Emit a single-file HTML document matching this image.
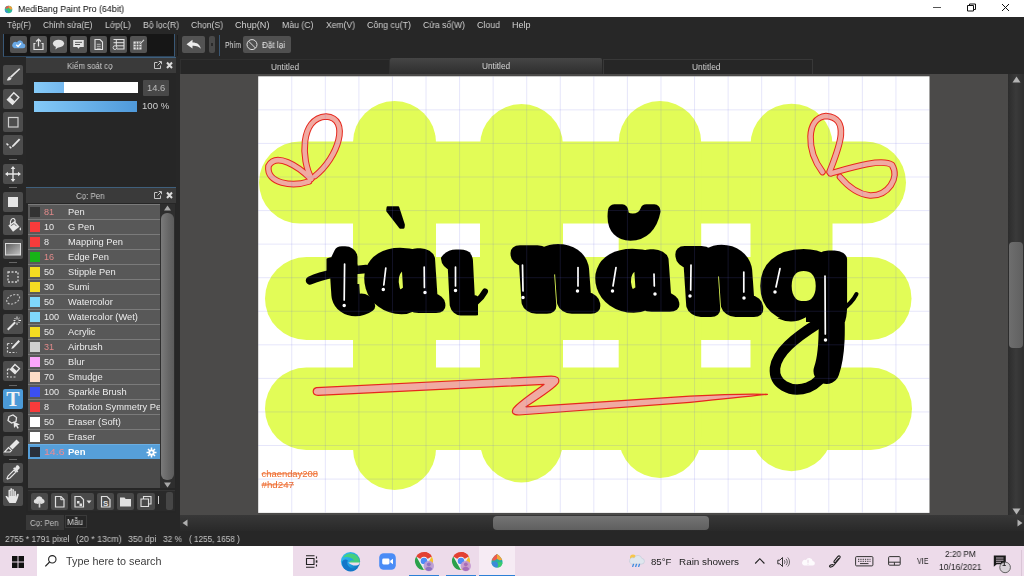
<!DOCTYPE html>
<html lang="vi">
<head>
<meta charset="utf-8">
<title>MediBang Paint Pro (64bit)</title>
<style>
*{box-sizing:border-box;margin:0;padding:0}
html,body{width:1024px;height:576px;overflow:hidden;background:#272727}
body{position:relative;font-family:"Liberation Sans","DejaVu Sans",sans-serif;font-size:9px;color:#d6d6d6}
.abs{position:absolute}
.tx{will-change:transform;position:absolute;white-space:nowrap;transform-origin:0 50%;display:block}
#titlebar{position:absolute;left:0;top:0;width:1024px;height:17px;background:#fff;color:#111}
#menubar{position:absolute;left:0;top:17px;width:1024px;height:16px;background:#272727;color:#d2d2d2}
#toolbar{position:absolute;left:0;top:33px;width:1024px;height:24px;background:#272727;color:#d8d8d8}
.tbgroup{position:absolute;left:3px;top:1px;width:172px;height:23px;background:#161616;border-left:1px solid #3a5876;border-right:1px solid #3a5876;border-bottom:1px solid #2c4359}
.tbtn{position:absolute;top:3px;width:17px;height:17px;background:#535353;border-radius:2px}
.tbtn svg{position:absolute;left:0;top:0;width:17px;height:17px}
#tools{position:absolute;left:0;top:57px;width:26px;height:473px;background:#272727}
.tool{position:absolute;left:3px;width:20px;height:20px;background:#4d4d4d;border-radius:2px}
.tool svg{position:absolute;left:0;top:0;width:20px;height:20px}
.tsep{position:absolute;left:9px;width:8px;height:1px;background:#666}
.panel{position:absolute;left:26px;width:150px;background:#262626}
.phead{position:absolute;left:0;top:0;width:150px;height:16px;background:#3a3a3a;border-top:1px solid #3f5f7c;color:#cdcdcd}
#canvasarea{position:absolute;left:179.5px;top:58px;width:828.5px;height:457px;background:#4b4a49;overflow:hidden}
#status{position:absolute;left:0;top:531px;width:1024px;height:15px;background:#272727;color:#c6c6c6}
#taskbar{position:absolute;left:0;top:546px;width:1024px;height:30px;background:#eddbea;color:#222}
#search{position:absolute;left:36.5px;top:0;width:256.5px;height:30px;background:#fff}
.row{position:absolute;left:0;width:132px;height:15px;overflow:hidden;background:#585858;border-top:1px solid #7b7b7b;color:#ececec}
.row i{position:absolute;left:2px;top:1.5px;width:10px;height:10px;display:block}
</style>
</head>
<body>
<div id="titlebar">
<svg class="abs" style="left:3.5px;top:4.5px" width="9" height="9" viewBox="0 0 11 11"><circle cx="5.5" cy="5.5" r="4.6" fill="#2fb7a0"/><path d="M5.5 0.9A4.6 4.6 0 0 1 10.1 5.5L5.5 5.5Z" fill="#f2a03c"/><path d="M5.5 0.9A4.6 4.6 0 0 0 1.2 4L5.5 5.5Z" fill="#e8574f"/><circle cx="5.3" cy="6" r="2.3" fill="#35c46e"/><path d="M1 6.5A4.6 4.6 0 0 0 4 9.9L5 7Z" fill="#3b8fd6"/></svg>
<span class="tx" style="left:18.0px;top:3.8px;font-size:9.3px;line-height:11px;transform:scaleX(0.950);color:#000;">MediBang Paint Pro (64bit)</span>
<svg class="abs" style="left:925px;top:0" width="99" height="17" viewBox="0 0 99 17"><path d="M8 7.5H16" stroke="#555" stroke-width="1" fill="none"/><path d="M42.5 5.5h6v5.5h-6zM44.5 5.5v-1.5h6v5.5h-2" stroke="#111" stroke-width="1" fill="none"/><path d="M77 4l7 7M84 4l-7 7" stroke="#111" stroke-width="1" fill="none"/></svg>
</div>
<div id="menubar">
<span class="tx" style="left:6.5px;top:3.1px;font-size:9.0px;line-height:11px;transform:scaleX(0.889);">Tệp(F)</span>
<span class="tx" style="left:43.0px;top:3.1px;font-size:9.0px;line-height:11px;transform:scaleX(0.924);">Chỉnh sửa(E)</span>
<span class="tx" style="left:105.0px;top:3.1px;font-size:9.0px;line-height:11px;transform:scaleX(0.948);">Lớp(L)</span>
<span class="tx" style="left:142.5px;top:3.1px;font-size:9.0px;line-height:11px;transform:scaleX(0.960);">Bộ lọc(R)</span>
<span class="tx" style="left:190.5px;top:3.1px;font-size:9.0px;line-height:11px;transform:scaleX(0.955);">Chọn(S)</span>
<span class="tx" style="left:234.5px;top:3.1px;font-size:9.0px;line-height:11px;transform:scaleX(1.014);">Chụp(N)</span>
<span class="tx" style="left:281.5px;top:3.1px;font-size:9.0px;line-height:11px;transform:scaleX(0.969);">Màu (C)</span>
<span class="tx" style="left:325.5px;top:3.1px;font-size:9.0px;line-height:11px;transform:scaleX(0.951);">Xem(V)</span>
<span class="tx" style="left:366.5px;top:3.1px;font-size:9.0px;line-height:11px;transform:scaleX(0.977);">Công cụ(T)</span>
<span class="tx" style="left:422.5px;top:3.1px;font-size:9.0px;line-height:11px;transform:scaleX(0.954);">Cửa sổ(W)</span>
<span class="tx" style="left:476.5px;top:3.1px;font-size:9.0px;line-height:11px;transform:scaleX(0.978);">Cloud</span>
<span class="tx" style="left:512.0px;top:3.1px;font-size:9.0px;line-height:11px;transform:scaleX(0.999);">Help</span>
</div>
<div id="toolbar">
<div class="tbgroup"></div>
<div class="tbtn" style="left:9.5px"><svg viewBox="0 0 17 17"><path d="M4.2 12.2h8.6a2.4 2.4 0 0 0 .4-4.8 3.3 3.3 0 0 0-6.2-1.2 2.6 2.6 0 0 0-2.8 6z" fill="#6aa9e6"/><path d="M6.3 8.8l1.7 1.7 3-3.2" stroke="#fff" stroke-width="1.3" fill="none"/></svg></div>
<div class="tbtn" style="left:29.5px"><svg viewBox="0 0 17 17"><path d="M5.5 7.5h-1.5v6h9v-6h-1.5" stroke="#e4e4e4" stroke-width="1.2" fill="none"/><path d="M8.5 10.5v-7M6.2 5.5l2.3-2.4 2.3 2.4" stroke="#e4e4e4" stroke-width="1.2" fill="none"/></svg></div>
<div class="tbtn" style="left:49.7px"><svg viewBox="0 0 17 17"><ellipse cx="8.5" cy="7.6" rx="5.6" ry="3.9" fill="#e4e4e4"/><path d="M6 10.5l-.6 3 3.2-2.4z" fill="#e4e4e4"/></svg></div>
<div class="tbtn" style="left:70.0px"><svg viewBox="0 0 17 17"><path d="M3.2 4h10.6v7h-4l-1.3 1.8-1.3-1.8h-4z" fill="#e4e4e4"/><path d="M5 6.3h7M5 8.5h5" stroke="#555" stroke-width="1"/></svg></div>
<div class="tbtn" style="left:90.0px"><svg viewBox="0 0 17 17"><path d="M5 3.5h5l2.5 2.5v7.5h-7.5z" stroke="#e4e4e4" stroke-width="1.1" fill="none"/><path d="M6.800 8.300h3.900M6.800 10.300h3.900M6.800 12.300h3.900" stroke="#e4e4e4" stroke-width=".7"/></svg></div>
<div class="tbtn" style="left:110.0px"><svg viewBox="0 0 17 17"><path d="M3.5 3.5h10.5v9.5h-7" stroke="#e4e4e4" stroke-width="1.1" fill="none"/><path d="M3.5 6.7h10.5M6.5 9.8h7.5M6.3 3.5v9" stroke="#e4e4e4" stroke-width="1"/><circle cx="5" cy="11.6" r="1.9" stroke="#e4e4e4" stroke-width=".9" fill="#535353"/></svg></div>
<div class="tbtn" style="left:130.2px"><svg viewBox="0 0 17 17"><path d="M3.5 5.5h8v8h-8z" fill="#e4e4e4"/><path d="M6.2 5.5v8M8.9 5.5v8M3.5 8.2h8M3.5 10.9h8" stroke="#535353" stroke-width=".9"/><path d="M9.5 7.5l4-4.2 1 .9-4 4.2z" fill="#e4e4e4" stroke="#535353" stroke-width=".6"/></svg></div>
<div class="abs" style="left:177px;top:2px;width:1px;height:21px;background:#1b1b1b"></div>
<div class="tbtn" style="left:182px;width:23px"><svg style="width:23px" viewBox="0 0 23 17"><path d="M4.5 8.2l6-4.4v2.7c4.5 0 7.6 2 8.3 6.3-1.700-2.300-4.300-3.200-8.300-3.100v2.900z" fill="#ececec"/></svg></div>
<div class="abs" style="left:209px;top:3px;width:6px;height:17px;background:#4a4a4a;border-radius:2px"></div>
<div class="abs" style="left:211px;top:10px;width:2px;height:3px;background:#2a2a2a"></div>
<div class="abs" style="left:219px;top:2px;width:1px;height:21px;background:#3a5672"></div>
<span class="tx" style="left:225.0px;top:6.5px;font-size:8.6px;line-height:10px;transform:scaleX(0.798);color:#dcdcdc;">Phím</span>
<div class="abs" style="left:243px;top:3px;width:48px;height:17px;background:#505050;border-radius:2px"></div>
<svg class="abs" style="left:245px;top:5px" width="14" height="14" viewBox="0 0 14 14"><circle cx="7" cy="6.6" r="5" stroke="#dedede" stroke-width="1" fill="none"/><path d="M3.6 3.2l6.800 6.800" stroke="#dedede" stroke-width="1"/></svg>
<span class="tx" style="left:262.0px;top:6.5px;font-size:8.6px;line-height:10px;transform:scaleX(0.944);color:#e2e2e2;">Đặt lại</span>
</div>
<div id="tools">
<div class="tool" style="top:8.2px"><svg viewBox="0 0 20 20"><path d="M16.2 3.2l1 1-8.800 8.600-1.400-1.400z" fill="#e6e6e6"/><path d="M6.600 11.600l2 2c-.8 1.700-2.700 2.300-4.800 1.600.9-.7.700-2.700 2.800-3.600z" fill="#e6e6e6"/></svg></div>
<div class="tool" style="top:31.5px"><svg viewBox="0 0 20 20"><path d="M10.800 3.800l5 4.600-6.300 6.900-5-4.600z" fill="none" stroke="#e6e6e6" stroke-width="1.400"/><path d="M7 8l5 4.600-2.500 2.700-5-4.600z" fill="#e6e6e6"/></svg></div>
<div class="tool" style="top:55.0px"><svg viewBox="0 0 20 20"><rect x="5.500" y="5.500" width="9.500" height="9.500" fill="none" stroke="#cfcfcf" stroke-width="1.200"/></svg></div>
<div class="tool" style="top:78.0px"><svg viewBox="0 0 20 20"><path d="M16 3.500l1.300 1.300-6.500 6.700-2 .7.700-2z" fill="#e6e6e6"/><path d="M3.500 8.500l1.800 1.800M6.500 11.500l1.800 1.800" stroke="#e6e6e6" stroke-width="1.600"/></svg></div>
<div class="tool" style="top:106.5px"><svg viewBox="0 0 20 20"><path d="M10 3v14M3 10h14" stroke="#e6e6e6" stroke-width="1.400"/><path d="M10 2l2.300 3h-4.600zM10 18l2.300-3h-4.600zM2 10l3-2.300v4.600zM18 10l-3-2.300v4.600z" fill="#e6e6e6"/></svg></div>
<div class="tool" style="top:134.7px"><svg viewBox="0 0 20 20"><rect x="5" y="5" width="10" height="10" fill="#e6e6e6"/></svg></div>
<div class="tool" style="top:158.0px"><svg viewBox="0 0 20 20"><path d="M5.300 10.500l6.200-4.500 5 5.800-6.500 5z" fill="#e6e6e6"/><path d="M7.500 9.500c-.8-3.500 1.200-6.500 3-6 1.300.4 1.800 2 1.600 3.500" stroke="#e6e6e6" stroke-width="1.100" fill="none"/><path d="M17.300 12.300c.9 1.400 1.100 2.700 0 3.100-1.100-.4-.9-1.700 0-3.100z" fill="#e6e6e6"/><path d="M7.800 10.800l3.300-2.200 2.500 2.600" stroke="#4d4d4d" stroke-width=".8" fill="none"/></svg></div>
<div class="tool" style="top:181.5px"><svg viewBox="0 0 20 20"><defs><linearGradient id="gg" x1="0" x2="1" y1="0" y2="1"><stop offset="0" stop-color="#5c5c5c"/><stop offset="1" stop-color="#c4c4c4"/></linearGradient></defs><rect x="5" y="4.500" width="15" height="11.500" fill="url(#gg)" stroke="#dcdcdc" stroke-width="1" transform="translate(-2.500 0)"/></svg></div>
<div class="tool" style="top:209.5px"><svg viewBox="0 0 20 20"><rect x="5" y="5" width="10" height="10" fill="none" stroke="#cfcfcf" stroke-width="1.300" stroke-dasharray="2 1.500"/></svg></div>
<div class="tool" style="top:233.0px"><svg viewBox="0 0 20 20"><path d="M4 12c-1.500-3 3-7 8-7.500 4-.3 5.500 2 4 5-1.500 3-6 5-9 4.500-1.500-.2-2.500-1-3-2z" fill="none" stroke="#bdbdbd" stroke-width="1.200" stroke-dasharray="2 1.500"/></svg></div>
<div class="tool" style="top:256.5px"><svg viewBox="0 0 20 20"><path d="M4 15l7.500-7.500 1.400 1.400-7.500 7.500z" fill="#e6e6e6"/><path d="M14 2.500v3M14 8.500v2.500M10.500 6.500h2M15.500 6.500h2.500M11.500 4l1.200 1.200M16.500 4l-1.200 1.200M16.500 9l-1.200-1.200" stroke="#e6e6e6" stroke-width="1"/></svg></div>
<div class="tool" style="top:280.3px"><svg viewBox="0 0 20 20"><path d="M4.500 6.500v9h9" fill="none" stroke="#cfcfcf" stroke-width="1.200" stroke-dasharray="2 1.500"/><path d="M4.500 6.500h5" fill="none" stroke="#cfcfcf" stroke-width="1.200" stroke-dasharray="2 1.500"/><path d="M15.500 3l1.500 1.500-6.500 6.700-2.200.8.800-2.200z" fill="#e6e6e6"/></svg></div>
<div class="tool" style="top:303.5px"><svg viewBox="0 0 20 20"><path d="M4.500 8v8h9" fill="none" stroke="#cfcfcf" stroke-width="1.200" stroke-dasharray="2 1.500"/><path d="M4.500 8h3" fill="none" stroke="#cfcfcf" stroke-width="1.200" stroke-dasharray="2 1.500"/><path d="M12 3.500l4.500 4-4.500 5-4.500-4z" fill="none" stroke="#e6e6e6" stroke-width="1.300"/><path d="M9.500 6.300l4.500 4-2 2.200-4.500-4z" fill="#e6e6e6"/></svg></div>
<div class="tool" style="top:331.7px;background:#4b9ad8"><span style="position:absolute;left:0;top:0;width:20px;height:20px;text-align:center;font-family:'Liberation Serif',serif;font-size:20px;font-weight:bold;line-height:20px;color:#f4f4f4">T</span></div>
<div class="tool" style="top:355.0px"><svg viewBox="0 0 20 20"><path d="M6 4.500l4-1.500 3.500 2.500-.5 4-4.500 1.500-3.500-2.500z" fill="none" stroke="#e6e6e6" stroke-width="1.300"/><path d="M10.500 9.500l6.500 3-2.700.8 1.500 2.700-1.300.7-1.500-2.700-2 2z" fill="#e6e6e6"/></svg></div>
<div class="tool" style="top:378.5px"><svg viewBox="0 0 20 20"><path d="M13.500 3.500l3 3-7 7-3-3z" fill="#e6e6e6"/><path d="M5.500 11.500l3 3-1.500 1.500h-5.500z" fill="none" stroke="#e6e6e6" stroke-width="1.200"/></svg></div>
<div class="tool" style="top:406.0px"><svg viewBox="0 0 20 20"><path d="M13.500 2.500c1.500-1 4 1.500 3 3l-2 2 .8.800-1.200 1.200-4-4 1.200-1.200.8.800z" fill="#e6e6e6"/><path d="M11 7l2 2-6 6-2.500 1-.5-.5 1-2.500z" fill="none" stroke="#e6e6e6" stroke-width="1.200"/></svg></div>
<div class="tool" style="top:429.0px"><svg viewBox="0 0 20 20"><path d="M6.500 17c-1.500-2-3-4.500-4-6.500.8-.8 2-.3 3 1.200v-7c0-1.300 1.800-1.300 1.800 0v-1.500c0-1.300 1.900-1.300 1.900 0v1c0-1.300 1.900-1.300 1.900 0v1.500c0-1.200 1.800-1.200 1.800 0l.1 5.300.9-2.500c.5-1.300 2.200-.7 1.800.6-.8 3-1.500 5.500-3 7.900z" fill="#e6e6e6"/><path d="M7.300 5v5M9.200 4v6M11.100 4.500v5.500" stroke="#4d4d4d" stroke-width=".5"/></svg></div>
<div class="tsep" style="top:102.0px"></div>
<div class="tsep" style="top:130.0px"></div>
<div class="tsep" style="top:205.0px"></div>
<div class="tsep" style="top:327.5px"></div>
<div class="tsep" style="top:401.7px"></div>
</div>
<div class="panel" style="top:57px;height:129px">
<div class="phead"><span class="tx" style="left:40.5px;top:2.5px;font-size:8.6px;line-height:10px;transform:scaleX(0.916);color:#cbcbcb;">Kiểm soát cọ</span><svg class="abs" style="left:127px;top:2px" width="22" height="11" viewBox="0 0 22 11"><path d="M4.500 2.500h-3v6h6v-3" stroke="#c4c4c4" stroke-width="1" fill="none"/><path d="M4.500 5.500l3.500-3.500M5.800 1.500h2.700v2.700" stroke="#c4c4c4" stroke-width="1" fill="none"/><path d="M14 2.500l5 5.500M19 2.500l-5 5.500" stroke="#dcdcdc" stroke-width="2"/></svg></div>
<div class="abs" style="left:7.500px;top:25px;width:104.500px;height:11.300px;background:#fff"></div>
<div class="abs" style="left:7.500px;top:25px;width:30.300px;height:11.300px;background:linear-gradient(90deg,#86cbf8,#74b8ee)"></div>
<div class="abs" style="left:117.300px;top:23px;width:25.700px;height:15.500px;background:#484848;border-radius:1px"></div>
<span class="tx" style="left:120.6px;top:25.8px;font-size:8.8px;line-height:11px;transform:scaleX(1.063);color:#bdbdbd;">14.6</span>
<div class="abs" style="left:7.500px;top:43.700px;width:103.500px;height:11.300px;background:linear-gradient(90deg,#84caf8,#4f99da)"></div>
<span class="tx" style="left:116.3px;top:44.1px;font-size:8.8px;line-height:11px;transform:scaleX(1.090);color:#d0d0d0;">100 %</span>
</div>
<div class="panel" style="top:187px;height:326px">
<div class="phead"><span class="tx" style="left:49.5px;top:2.5px;font-size:8.6px;line-height:10px;transform:scaleX(0.918);color:#cbcbcb;">Cọ: Pen</span><svg class="abs" style="left:127px;top:2px" width="22" height="11" viewBox="0 0 22 11"><path d="M4.500 2.500h-3v6h6v-3" stroke="#c4c4c4" stroke-width="1" fill="none"/><path d="M4.500 5.500l3.500-3.500M5.800 1.500h2.700v2.700" stroke="#c4c4c4" stroke-width="1" fill="none"/><path d="M14 2.500l5 5.500M19 2.500l-5 5.500" stroke="#dcdcdc" stroke-width="2"/></svg></div>
<div class="abs" style="left:2px;top:17px;width:132px;height:284px;background:#4a4a4a;overflow:hidden">
<div class="row" style="top:0.0px"><i style="background:#333333"></i><span class="tx" style="left:16.3px;top:2.3px;font-size:8.8px;line-height:11px;transform:scaleX(1.030);color:#e08a8a;">81</span><span class="tx" style="left:40.2px;top:2.3px;font-size:8.8px;line-height:11px;transform:scaleX(1.060);color:#ececec;">Pen</span></div>
<div class="row" style="top:15.0px"><i style="background:#f83b3b"></i><span class="tx" style="left:16.3px;top:2.3px;font-size:8.8px;line-height:11px;transform:scaleX(1.030);color:#eaeaea;">10</span><span class="tx" style="left:40.2px;top:2.3px;font-size:8.8px;line-height:11px;transform:scaleX(1.060);color:#ececec;">G Pen</span></div>
<div class="row" style="top:30.0px"><i style="background:#f83b3b"></i><span class="tx" style="left:16.3px;top:2.3px;font-size:8.8px;line-height:11px;transform:scaleX(1.030);color:#eaeaea;">8</span><span class="tx" style="left:40.2px;top:2.3px;font-size:8.8px;line-height:11px;transform:scaleX(1.060);color:#ececec;">Mapping Pen</span></div>
<div class="row" style="top:45.0px"><i style="background:#17b417"></i><span class="tx" style="left:16.3px;top:2.3px;font-size:8.8px;line-height:11px;transform:scaleX(1.030);color:#e08a8a;">16</span><span class="tx" style="left:40.2px;top:2.3px;font-size:8.8px;line-height:11px;transform:scaleX(1.060);color:#ececec;">Edge Pen</span></div>
<div class="row" style="top:60.0px"><i style="background:#f4dc22"></i><span class="tx" style="left:16.3px;top:2.3px;font-size:8.8px;line-height:11px;transform:scaleX(1.030);color:#eaeaea;">50</span><span class="tx" style="left:40.2px;top:2.3px;font-size:8.8px;line-height:11px;transform:scaleX(1.060);color:#ececec;">Stipple Pen</span></div>
<div class="row" style="top:75.0px"><i style="background:#f4dc22"></i><span class="tx" style="left:16.3px;top:2.3px;font-size:8.8px;line-height:11px;transform:scaleX(1.030);color:#eaeaea;">30</span><span class="tx" style="left:40.2px;top:2.3px;font-size:8.8px;line-height:11px;transform:scaleX(1.060);color:#ececec;">Sumi</span></div>
<div class="row" style="top:90.0px"><i style="background:#7fd7fb"></i><span class="tx" style="left:16.3px;top:2.3px;font-size:8.8px;line-height:11px;transform:scaleX(1.030);color:#eaeaea;">50</span><span class="tx" style="left:40.2px;top:2.3px;font-size:8.8px;line-height:11px;transform:scaleX(1.060);color:#ececec;">Watercolor</span></div>
<div class="row" style="top:105.0px"><i style="background:#7fd7fb"></i><span class="tx" style="left:16.3px;top:2.3px;font-size:8.8px;line-height:11px;transform:scaleX(1.030);color:#eaeaea;">100</span><span class="tx" style="left:40.2px;top:2.3px;font-size:8.8px;line-height:11px;transform:scaleX(1.060);color:#ececec;">Watercolor (Wet)</span></div>
<div class="row" style="top:120.0px"><i style="background:#f4dc22"></i><span class="tx" style="left:16.3px;top:2.3px;font-size:8.8px;line-height:11px;transform:scaleX(1.030);color:#eaeaea;">50</span><span class="tx" style="left:40.2px;top:2.3px;font-size:8.8px;line-height:11px;transform:scaleX(1.060);color:#ececec;">Acrylic</span></div>
<div class="row" style="top:135.0px"><i style="background:#cfcfcf"></i><span class="tx" style="left:16.3px;top:2.3px;font-size:8.8px;line-height:11px;transform:scaleX(1.030);color:#e08a8a;">31</span><span class="tx" style="left:40.2px;top:2.3px;font-size:8.8px;line-height:11px;transform:scaleX(1.060);color:#ececec;">Airbrush</span></div>
<div class="row" style="top:150.0px"><i style="background:#fba6fb"></i><span class="tx" style="left:16.3px;top:2.3px;font-size:8.8px;line-height:11px;transform:scaleX(1.030);color:#eaeaea;">50</span><span class="tx" style="left:40.2px;top:2.3px;font-size:8.8px;line-height:11px;transform:scaleX(1.060);color:#ececec;">Blur</span></div>
<div class="row" style="top:165.0px"><i style="background:#fddcc6"></i><span class="tx" style="left:16.3px;top:2.3px;font-size:8.8px;line-height:11px;transform:scaleX(1.030);color:#eaeaea;">70</span><span class="tx" style="left:40.2px;top:2.3px;font-size:8.8px;line-height:11px;transform:scaleX(1.060);color:#ececec;">Smudge</span></div>
<div class="row" style="top:180.0px"><i style="background:#3b4ff2"></i><span class="tx" style="left:16.3px;top:2.3px;font-size:8.8px;line-height:11px;transform:scaleX(1.030);color:#eaeaea;">100</span><span class="tx" style="left:40.2px;top:2.3px;font-size:8.8px;line-height:11px;transform:scaleX(1.060);color:#ececec;">Sparkle Brush</span></div>
<div class="row" style="top:195.0px"><i style="background:#f83b3b"></i><span class="tx" style="left:16.3px;top:2.3px;font-size:8.8px;line-height:11px;transform:scaleX(1.030);color:#eaeaea;">8</span><span class="tx" style="left:40.2px;top:2.3px;font-size:8.8px;line-height:11px;transform:scaleX(1.060);color:#ececec;">Rotation Symmetry Pe</span></div>
<div class="row" style="top:210.0px"><i style="background:#ffffff"></i><span class="tx" style="left:16.3px;top:2.3px;font-size:8.8px;line-height:11px;transform:scaleX(1.030);color:#eaeaea;">50</span><span class="tx" style="left:40.2px;top:2.3px;font-size:8.8px;line-height:11px;transform:scaleX(1.060);color:#ececec;">Eraser (Soft)</span></div>
<div class="row" style="top:225.0px"><i style="background:#ffffff"></i><span class="tx" style="left:16.3px;top:2.3px;font-size:8.8px;line-height:11px;transform:scaleX(1.030);color:#eaeaea;">50</span><span class="tx" style="left:40.2px;top:2.3px;font-size:8.8px;line-height:11px;transform:scaleX(1.060);color:#ececec;">Eraser</span></div>
<div class="row" style="top:240.0px;background:#569fd9;border-top:1px solid #6aaee2"><i style="background:#2a2f3a"></i><span class="tx" style="left:16.0px;top:2.3px;font-size:8.8px;line-height:11px;transform:scaleX(1.197);color:#f08a92;">14.6</span><span class="tx" style="left:40.0px;top:2.3px;font-size:8.8px;line-height:11px;transform:scaleX(1.085);color:#ffffff;font-weight:bold;">Pen</span><svg class="abs" style="left:118px;top:1.500px" width="11" height="11" viewBox="0 0 11 11"><circle cx="5.500" cy="5.500" r="3.100" fill="#fff"/><path d="M5.500 .5v10M.5 5.500h10M2 2l7 7M9 2l-7 7" stroke="#fff" stroke-width="1.500"/><circle cx="5.500" cy="5.500" r="1.200" fill="#569fd9"/></svg></div>
</div>
<div class="abs" style="left:134px;top:17px;width:15px;height:284px;background:#2e2e2e"></div>
<svg class="abs" style="left:137px;top:18px" width="9" height="6" viewBox="0 0 9 6"><path d="M4.500 .5l3.500 5h-7z" fill="#a8a8a8"/></svg>
<div class="abs" style="left:135px;top:25.500px;width:13px;height:267px;border-radius:6px;background:linear-gradient(90deg,#7a7a7a,#666 60%,#5c5c5c)"></div>
<svg class="abs" style="left:137px;top:294.500px" width="9" height="6" viewBox="0 0 9 6"><path d="M4.500 5.500l3.500-5h-7z" fill="#a8a8a8"/></svg>
<div class="abs" style="left:2px;top:303px;width:147px;height:21px;background:#2a2a2a;border-top:1px solid #353535"></div>
<div class="abs" style="left:5.0px;top:305.500px;width:17px;height:17px;background:#4a4a4a;border-radius:2px"><svg class="abs" style="left:0;top:0" width="17" height="17" viewBox="0 0 17 17"><path d="M4.500 10.500a2.300 2.300 0 0 1 .3-4.500 3.500 3.500 0 0 1 6.800 0 2.300 2.300 0 0 1 .3 4.500z" fill="#e0e0e0"/><path d="M8.500 14.500v-6M6 10.500l2.500-2.800 2.500 2.800" stroke="#e0e0e0" stroke-width="1.600" fill="none"/><path d="M8.500 14.500v-5.500M6.300 10.300l2.200-2.400 2.200 2.400" stroke="#4a4a4a" stroke-width=".1" fill="none"/></svg></div>
<div class="abs" style="left:25.0px;top:305.500px;width:17px;height:17px;background:#4a4a4a;border-radius:2px"><svg class="abs" style="left:0;top:0" width="17" height="17" viewBox="0 0 17 17"><path d="M4.500 3.500h5.500l3 3v7.500h-8.500z" stroke="#e0e0e0" stroke-width="1.200" fill="none"/><path d="M9.800 3.500v3.200h3" stroke="#e0e0e0" stroke-width="1" fill="none"/></svg></div>
<div class="abs" style="left:45.0px;top:305.500px;width:23px;height:17px;background:#4a4a4a;border-radius:2px"><svg class="abs" style="left:0;top:0" width="23" height="17" viewBox="0 0 23 17"><path d="M4 3.500h5.500l3 3v7.500h-8.500z" stroke="#e0e0e0" stroke-width="1.200" fill="none"/><path d="M6 8h2.500v2.500h-2.500zM8.500 10.500h2.500v2.500h-2.500z" fill="#e0e0e0"/><path d="M15.500 7.500h5l-2.500 3z" fill="#e0e0e0"/></svg></div>
<div class="abs" style="left:71.0px;top:305.500px;width:17px;height:17px;background:#4a4a4a;border-radius:2px"><svg class="abs" style="left:0;top:0" width="17" height="17" viewBox="0 0 17 17"><path d="M4.500 3.500h5.500l3 3v7.500h-8.500z" stroke="#e0e0e0" stroke-width="1.200" fill="none"/><text x="8.600" y="12.600" font-size="8" font-weight="bold" text-anchor="middle" fill="#e0e0e0" font-family="Liberation Sans,sans-serif">S</text></svg></div>
<div class="abs" style="left:91.0px;top:305.500px;width:17px;height:17px;background:#4a4a4a;border-radius:2px"><svg class="abs" style="left:0;top:0" width="17" height="17" viewBox="0 0 17 17"><path d="M3 4.500h4.500l1.200 1.500h5.300v7.500h-11z" fill="#e0e0e0"/></svg></div>
<div class="abs" style="left:111.0px;top:305.500px;width:18px;height:17px;background:#4a4a4a;border-radius:2px"><svg class="abs" style="left:0;top:0" width="18" height="17" viewBox="0 0 18 17"><path d="M6.500 3.500h7.500v7.500h-7.500z" stroke="#e0e0e0" stroke-width="1.100" fill="none"/><path d="M4 6h7.500v7.500h-7.500z" stroke="#e0e0e0" stroke-width="1.100" fill="#4a4a4a"/></svg></div>
<div class="abs" style="left:132px;top:309px;width:1px;height:8px;background:#cfcfcf"></div>
<div class="abs" style="left:140px;top:305px;width:7px;height:18px;background:#464646;border-radius:2px"></div>
</div>
<div class="abs" style="left:26px;top:514.500px;width:37.500px;height:15.500px;background:#393939"></div>
<span class="tx" style="left:30.0px;top:518.3px;font-size:8.6px;line-height:10px;transform:scaleX(0.918);color:#c4c4c4;">Cọ: Pen</span>
<div class="abs" style="left:64.500px;top:514.500px;width:22px;height:13px;border:1px solid #3a3a3a;background:#262626"></div>
<span class="tx" style="left:66.5px;top:516.5px;font-size:8.6px;line-height:10px;transform:scaleX(0.957);color:#d4d4d4;">Mẫu</span>
<div id="canvasarea">
<div class="abs" style="left:0;top:0;width:830px;height:16px;background:#272727"></div>
<div class="abs" style="left:0;top:1px;width:210px;height:15px;background:#262626;border:1px solid #303030;border-bottom:none"></div>
<div class="abs" style="left:210.500px;top:0;width:212px;height:16px;background:linear-gradient(#454545,#2e2e2e);border-radius:2px 2px 0 0"></div>
<div class="abs" style="left:423px;top:1px;width:210px;height:15px;background:#262626;border:1px solid #383838;border-bottom:none"></div>
<span class="tx" style="left:91.0px;top:4.0px;font-size:8.3px;line-height:10px;transform:scaleX(0.995);color:#cfcfcf;">Untitled</span>
<span class="tx" style="left:302.0px;top:3.0px;font-size:8.3px;line-height:10px;transform:scaleX(0.995);color:#d6d6d6;">Untitled</span>
<span class="tx" style="left:512.5px;top:4.0px;font-size:8.3px;line-height:10px;transform:scaleX(1.013);color:#cfcfcf;">Untitled</span>
<svg class="abs" style="left:.5px;top:0" width="828" height="457" viewBox="180 58 828 457">
<rect x="258.200" y="76.300" width="671.300" height="436.600" fill="#fff"/>
<g fill="#e2fc57">
<rect x="259" y="141.500" width="647" height="82" rx="41"/>
<rect x="265" y="257" width="646.500" height="83" rx="41.500"/>
<rect x="265" y="367.500" width="647" height="82.500" rx="41.250"/>
<rect x="353" y="101" width="83" height="389" rx="41.500"/>
<rect x="480" y="104" width="83" height="378.500" rx="41.500"/>
<rect x="618.700" y="101" width="82.500" height="377" rx="41.250"/>
<rect x="750.500" y="103.700" width="82" height="367.500" rx="41"/>
</g>
<defs><clipPath id="cpa"><rect x="438" y="249.500" width="40" height="90" rx="18"/></clipPath><clipPath id="cpt"><rect x="326.500" y="240" width="31" height="70" rx="12"/><rect x="318" y="284" width="60" height="40"/></clipPath><clipPath id="cpg"><ellipse cx="791" cy="285" rx="32" ry="36.500"/><rect x="806" y="230" width="60" height="92"/><rect x="790" y="230" width="20" height="40"/></clipPath></defs>
<g id="lettering" stroke="#000" fill="#000" stroke-linejoin="round" stroke-linecap="round"><title>tài năng</title>
<path d="M310 280.500C322 275 345 270.500 366 269" fill="none" stroke-width="8.500"/>
<path d="M462 308C473 307 481 299 485 291.500" fill="none" stroke-width="6"/>
<path d="M842 310C849 305 854 299 856.500 294" fill="none" stroke-width="4"/>
<path d="M832 330C833 358 827 380 808 387.500C790 393.500 773.500 384 775 368C777 352 795 338 817 324" fill="none" stroke-width="10.500"/>
<path d="M831 300C832.500 330 832.500 354 826.500 371" fill="none" stroke-width="26"/>
<g clip-path="url(#cpt)"><text transform="translate(338.7 306.7) scale(0.981 0.843) skewX(13)" font-family="Liberation Serif,serif" font-style="italic" font-weight="normal" font-size="110" stroke-width="20">t</text></g>
<text transform="translate(377.9 303.5) scale(1.157 0.911) skewX(13)" font-family="Liberation Serif,serif" font-style="italic" font-weight="normal" font-size="110" stroke-width="20">a</text>
<text transform="translate(408.2 322.3) scale(0.750 1.158)" font-family="Liberation Serif,serif" font-style="italic" font-weight="bold" font-size="110" stroke-width="3">&#x300;</text>
<g clip-path="url(#cpa)"><text transform="translate(453.2 305.6) scale(0.875 0.942) skewX(13)" font-family="Liberation Serif,serif" font-style="italic" font-weight="normal" font-size="110" stroke-width="20">i</text></g>
<text transform="translate(528.9 303.8) scale(1.184 0.972) skewX(13)" font-family="Liberation Serif,serif" font-style="italic" font-weight="normal" font-size="110" stroke-width="20">n</text>
<text transform="translate(609.4 303.4) scale(1.200 0.877) skewX(13)" font-family="Liberation Serif,serif" font-style="italic" font-weight="normal" font-size="110" stroke-width="20">a</text>
<text transform="translate(620.7 314.3) scale(1.244 1.333)" font-family="Liberation Serif,serif" font-style="italic" font-weight="bold" font-size="110" stroke-width="10">&#x306;</text>
<text transform="translate(693.5 307.4) scale(1.158 1.007) skewX(13)" font-family="Liberation Serif,serif" font-style="italic" font-weight="normal" font-size="110" stroke-width="20">n</text>
<g clip-path="url(#cpg)"><text transform="translate(761.5 313.6) scale(1.475 1.051)" font-family="DejaVu Sans,sans-serif" font-style="normal" font-weight="200" font-size="95" stroke-width="17">g</text></g>
</g>
<g stroke="#fff" stroke-width="1.700" stroke-linecap="round" fill="#fff">
<path d="M344.6 264.0L344.2 300.0"/><circle cx="344.2" cy="305.5" r=".9"/>
<path d="M385.8 268.0L383.8 285.0"/><circle cx="383.3" cy="289.5" r=".9"/>
<path d="M424.2 267.0L424.4 287.5"/><circle cx="425.0" cy="292.5" r=".9"/>
<path d="M455.5 267.0L455.5 286.0"/><circle cx="455.5" cy="290.5" r=".9"/>
<path d="M522.5 265.0L523.0 291.0"/><circle cx="523.0" cy="297.5" r=".9"/>
<path d="M578.0 267.5L578.0 286.0"/><circle cx="577.5" cy="291.0" r=".9"/>
<path d="M616.0 267.5L613.0 286.0"/><circle cx="612.5" cy="291.0" r=".9"/>
<path d="M654.0 274.0L654.3 286.0"/><circle cx="655.0" cy="294.0" r=".9"/>
<path d="M691.0 265.0L690.7 290.0"/><circle cx="690.0" cy="296.0" r=".9"/>
<path d="M743.8 272.0L743.8 292.0"/><circle cx="744.0" cy="298.0" r=".9"/>
<path d="M780.0 268.5L776.0 287.0"/><circle cx="775.0" cy="292.0" r=".9"/>
<path d="M825.0 276.0L825.3 334.0"/><circle cx="825.5" cy="340.0" r=".9"/>
</g>
<path d="M311.500 178.500C301 160 300 118 326 116.500C351 118 338 158 315 176" fill="none" stroke="#e6281e" stroke-width="6.600" stroke-linecap="round" stroke-linejoin="round"/>
<path d="M311 179C298 166 276 152 268.500 166C266 184 293 187 309 181.500" fill="none" stroke="#e6281e" stroke-width="6.600" stroke-linecap="round" stroke-linejoin="round"/>
<path d="M822.500 172C806 150 806 118 826 116C852 118 838 150 829.500 172" fill="none" stroke="#e6281e" stroke-width="6.600" stroke-linecap="round" stroke-linejoin="round"/>
<path d="M830.500 173.500C850 168 882 158 892 165C900 178 888 196 870 195.500C856 194 845 183 840 177" fill="none" stroke="#e6281e" stroke-width="6.600" stroke-linecap="round" stroke-linejoin="round"/>
<path d="M311.500 178.500C301 160 300 118 326 116.500C351 118 338 158 315 176" fill="none" stroke="#f0aaa2" stroke-width="4.600" stroke-linecap="round" stroke-linejoin="round"/>
<path d="M311 179C298 166 276 152 268.500 166C266 184 293 187 309 181.500" fill="none" stroke="#f0aaa2" stroke-width="4.600" stroke-linecap="round" stroke-linejoin="round"/>
<path d="M822.500 172C806 150 806 118 826 116C852 118 838 150 829.500 172" fill="none" stroke="#f0aaa2" stroke-width="4.600" stroke-linecap="round" stroke-linejoin="round"/>
<path d="M830.500 173.500C850 168 882 158 892 165C900 178 888 196 870 195.500C856 194 845 183 840 177" fill="none" stroke="#f0aaa2" stroke-width="4.600" stroke-linecap="round" stroke-linejoin="round"/>
<path d="M316.500 387.600L551 376.100Q560.500 376 558.500 382.500Q556 387.500 526 406.800L690 396.200Q740 393.400 767.500 394.300Q740 397.600 690 402.300L519 415Q510 414.800 513.300 408.500Q517 403 544 384.400L318 395.300Q313 395.200 313.200 391.300Q313.500 388 316.500 387.600Z" fill="#f0aaa2" stroke="#e6281e" stroke-width="1.200" stroke-linejoin="round"/>
<text x="261.500" y="476.500" font-family="Liberation Sans,sans-serif" font-size="8.600" fill="#ee6a2c" text-decoration="line-through" textLength="56.500" lengthAdjust="spacingAndGlyphs">chaenday208</text>
<text x="261.500" y="487.500" font-family="Liberation Sans,sans-serif" font-size="8.600" fill="#ee6a2c" text-decoration="line-through" textLength="32.500" lengthAdjust="spacingAndGlyphs">#hd247</text>
<path d="M291.76 76.300V512.500M325.33 76.300V512.500M358.89 76.300V512.500M392.46 76.300V512.500M426.02 76.300V512.500M459.59 76.300V512.500M493.15 76.300V512.500M526.72 76.300V512.500M560.28 76.300V512.500M593.85 76.300V512.500M627.41 76.300V512.500M660.98 76.300V512.500M694.54 76.300V512.500M728.11 76.300V512.500M761.67 76.300V512.500M795.24 76.300V512.500M828.81 76.300V512.500M862.37 76.300V512.500M895.93 76.300V512.500M258.200 109.86H929.500M258.200 143.43H929.500M258.200 177.00H929.500M258.200 210.56H929.500M258.200 244.12H929.500M258.200 277.69H929.500M258.200 311.25H929.500M258.200 344.82H929.500M258.200 378.38H929.500M258.200 411.95H929.500M258.200 445.51H929.500M258.200 479.08H929.500" stroke="#6a6ae0" stroke-opacity=".17" stroke-width="1" fill="none"/>
</svg>
</div>
<div class="abs" style="left:1008px;top:74px;width:16px;height:441px;background:linear-gradient(90deg,#2c2c2c,#3a3a3a 50%,#2e2e2e)"></div>
<div class="abs" style="left:1008.500px;top:242px;width:14px;height:106px;border-radius:4px;background:linear-gradient(90deg,#6e6e6e,#606060)"></div>
<svg class="abs" style="left:1012px;top:75.500px" width="9" height="7" viewBox="0 0 9 7"><path d="M4.500 .5l4 6h-8z" fill="#b4b4b4"/></svg>
<svg class="abs" style="left:1012px;top:508px" width="9" height="7" viewBox="0 0 9 7"><path d="M4.500 6.500l4-6h-8z" fill="#b4b4b4"/></svg>
<div class="abs" style="left:180px;top:515px;width:844px;height:16px;background:linear-gradient(#383838,#292929)"></div>
<div class="abs" style="left:493px;top:515.500px;width:216px;height:14px;border-radius:4px;background:linear-gradient(#747474,#5f5f5f)"></div>
<svg class="abs" style="left:182px;top:519px" width="6" height="8" viewBox="0 0 6 8"><path d="M.5 4l5-3.500v7z" fill="#b0b0b0"/></svg>
<svg class="abs" style="left:1016.500px;top:519px" width="6" height="8" viewBox="0 0 6 8"><path d="M5.500 4l-5-3.500v7z" fill="#b0b0b0"/></svg>
<div id="status">
<span class="tx" style="left:4.5px;top:2.5px;font-size:9.0px;line-height:11px;transform:scaleX(0.927);color:#c8c8c8;">2755 * 1791 pixel</span>
<span class="tx" style="left:76.0px;top:2.5px;font-size:9.0px;line-height:11px;transform:scaleX(0.982);color:#c8c8c8;">(20 * 13cm)</span>
<span class="tx" style="left:128.0px;top:2.5px;font-size:9.0px;line-height:11px;transform:scaleX(0.965);color:#c8c8c8;">350 dpi</span>
<span class="tx" style="left:163.0px;top:2.5px;font-size:9.0px;line-height:11px;transform:scaleX(0.926);color:#c8c8c8;">32 %</span>
<span class="tx" style="left:188.7px;top:2.5px;font-size:9.0px;line-height:11px;transform:scaleX(0.907);color:#c8c8c8;">( 1255, 1658 )</span>
</div>
<div id="taskbar">
<svg class="abs" style="left:12px;top:9.500px" width="12" height="12" viewBox="0 0 12 12"><path d="M0 0h5.500v5.500h-5.500zM6.500 0h5.500v5.500h-5.500zM0 6.500h5.500v5.500h-5.500zM6.500 6.500h5.500v5.500h-5.500z" fill="#111"/></svg>
<div id="search"></div>
<svg class="abs" style="left:44px;top:8px" width="14" height="14" viewBox="0 0 14 14"><circle cx="8.300" cy="5.300" r="3.700" stroke="#222" stroke-width="1.100" fill="none"/><path d="M5.600 8l-4.300 4.400" stroke="#222" stroke-width="1.200"/></svg>
<span class="tx" style="left:66.3px;top:8.8px;font-size:10.6px;line-height:13px;transform:scaleX(1.020);color:#3c3c3c;">Type here to search</span>
<svg class="abs" style="left:305px;top:8.500px" width="14" height="13" viewBox="0 0 14 13"><path d="M1.500 3.500h7.500v6h-7.500z" stroke="#222" stroke-width="1.100" fill="none"/><path d="M1 .8h8.500M1 12.200h8.500M11.500 1.500v2M11.500 9.500v2" stroke="#222" stroke-width="1.100"/><rect x="10.800" y="5.300" width="1.600" height="2.400" fill="#222"/></svg>
<svg class="abs" style="left:339.500px;top:5px" width="21" height="21" viewBox="0 0 21 21"><defs><linearGradient id="eg" x1="0" y1="0" x2="1" y2="1"><stop offset="0" stop-color="#35c1f1"/><stop offset=".6" stop-color="#1b9de2"/><stop offset="1" stop-color="#0c59a4"/></linearGradient></defs><circle cx="10.500" cy="10.500" r="9.600" fill="url(#eg)"/><path d="M3 6.500c3-5 12-5.500 15.500 0 1.500 2.500 1.500 5 1.400 5.500h-10.500c0-2.500 2.800-3.400 4.600-2.200-1-3.500-8-4.800-11 -3.300z" fill="#4bd66b" opacity=".85"/><path d="M8.200 11.500h11.600c-.3 1.800-1.600 3-3.600 3-2.500.4-5-.5-8-3z" fill="#eddbea"/><path d="M8 9.500c-1.500 2-.8 6 3.500 7.800 2.500 1 5.500.2 7-1.500-1.500 3-4.800 4.800-8 4.800-5.500 0-9-5.500-8.500-9.500.5-2 3.500-3.800 6-1.600z" fill="#1277c9"/></svg>
<svg class="abs" style="left:378.500px;top:6.500px" width="17" height="17" viewBox="0 0 17 17"><rect x=".2" y=".2" width="16.600" height="16.600" rx="4.500" fill="#4a8cf6"/><rect x="3.200" y="5.600" width="7.300" height="5.800" rx="1.400" fill="#fff"/><path d="M11.200 7.800l2.800-2v5.400l-2.800-2z" fill="#fff"/></svg>
<svg class="abs" style="left:414.0px;top:5px" width="22" height="22" viewBox="0 0 22 22"><circle cx="10" cy="10" r="9" fill="#e8eaed"/><path d="M10 10L2.200 5.500A9 9 0 0 1 17.800 5.500z" fill="#e34133"/><path d="M10 1a9 9 0 0 1 7.800 4.500H10z" fill="#e34133"/><path d="M17.800 5.500A9 9 0 0 1 10 19l4-7z" fill="#f6c028"/><path d="M2.200 5.500L6.100 12.200 10 19A9 9 0 0 1 2.200 5.500z" fill="#2ba14b"/><circle cx="10" cy="10" r="4.300" fill="#f3f3f3"/><circle cx="10" cy="10" r="3.300" fill="#4c8bf5"/><circle cx="14.800" cy="15" r="5.200" fill="#b79ad6" opacity=".92"/><circle cx="14.800" cy="13.300" r="1.900" fill="#8f72c2"/><path d="M11.300 18.300c.5-3.500 6.500-3.500 7 0a5.200 5.200 0 0 1-7 0z" fill="#8f72c2"/></svg>
<svg class="abs" style="left:450.7px;top:5px" width="22" height="22" viewBox="0 0 22 22"><circle cx="10" cy="10" r="9" fill="#e8eaed"/><path d="M10 10L2.200 5.500A9 9 0 0 1 17.800 5.500z" fill="#e34133"/><path d="M10 1a9 9 0 0 1 7.800 4.500H10z" fill="#e34133"/><path d="M17.800 5.500A9 9 0 0 1 10 19l4-7z" fill="#f6c028"/><path d="M2.200 5.500L6.100 12.200 10 19A9 9 0 0 1 2.200 5.500z" fill="#2ba14b"/><circle cx="10" cy="10" r="4.300" fill="#f3f3f3"/><circle cx="10" cy="10" r="3.300" fill="#4c8bf5"/><circle cx="14.800" cy="15" r="5.200" fill="#c79ad0" opacity=".92"/><circle cx="14.800" cy="13.300" r="1.900" fill="#a86db8"/><path d="M11.300 18.300c.5-3.500 6.500-3.500 7 0a5.200 5.200 0 0 1-7 0z" fill="#a86db8"/></svg>
<div class="abs" style="left:478.700px;top:0;width:36.300px;height:30px;background:#f6ebf4"></div>
<svg class="abs" style="left:490px;top:7px" width="14" height="15.500" viewBox="0 0 18 19"><path d="M9 .8c4 3 7.200 6.400 7.200 10.300a7.200 7.200 0 0 1-14.400 0C1.800 7.200 5 3.800 9 .8z" fill="#25b39e"/><path d="M9 .8c3 2.200 5.500 4.700 6.600 7.400-2.500 1.300-5 .3-6.600-1.400z" fill="#f6a23a"/><path d="M9 .8C6 3 3.200 5.800 2.200 8.700c2.800 1 5.500-.2 6.800-1.900z" fill="#ee5a4d"/><path d="M2 12.500c1.500-2.500 5.500-3 7.500-.5s1.500 5-.5 6.200a7.200 7.200 0 0 1-7-5.700z" fill="#3b8ad8"/><path d="M9.500 12c2-1.500 5-1.300 6.600.4a7.200 7.200 0 0 1-7.100 5.800c1.800-1.600 2-4.200.5-6.200z" fill="#3bcc6b"/></svg>
<div class="abs" style="left:408.7px;top:28.500px;width:30.0px;height:1.500px;background:#2c7fd6"></div>
<div class="abs" style="left:445.5px;top:28.500px;width:30.0px;height:1.500px;background:#2c7fd6"></div>
<div class="abs" style="left:478.7px;top:28.500px;width:36.3px;height:1.500px;background:#2c7fd6"></div>
<svg class="abs" style="left:627px;top:7px" width="19" height="14" viewBox="0 0 19 14"><circle cx="6" cy="4.500" r="3" fill="#f7c64a"/><path d="M4.500 11h10a2.800 2.800 0 0 0 .3-5.600 4 4 0 0 0-7.600-.5 3.200 3.200 0 0 0-2.700 6.100z" fill="#dfe6ee" stroke="#b9c4d2" stroke-width=".5"/><path d="M6.500 11.300l-.8 2.200M9.500 11.300l-.8 2.200M12.500 11.300l-.8 2.200" stroke="#3b8de0" stroke-width="1.300" stroke-linecap="round"/></svg>
<span class="tx" style="left:651.3px;top:10.0px;font-size:9.6px;line-height:12px;transform:scaleX(1.006);color:#222;">85°F</span>
<span class="tx" style="left:678.8px;top:10.0px;font-size:9.6px;line-height:12px;transform:scaleX(1.032);color:#222;">Rain showers</span>
<svg class="abs" style="left:754px;top:11px" width="12" height="8" viewBox="0 0 12 8"><path d="M1.200 6.500l4.600-4.800 4.600 4.800" stroke="#222" stroke-width="1.100" fill="none"/></svg>
<svg class="abs" style="left:776.500px;top:9.500px" width="13" height="12" viewBox="0 0 13 12"><path d="M.8 4.200h2l2.700-2.700v9l-2.700-2.700h-2z" stroke="#222" stroke-width=".9" fill="none"/><path d="M7.300 4.200c.9 1 .9 2.600 0 3.600M9 2.800c1.700 1.800 1.700 4.600 0 6.400M10.700 1.500c2.400 2.600 2.400 6.400 0 9" stroke="#444" stroke-width=".8" fill="none"/></svg>
<svg class="abs" style="left:800.500px;top:9.500px" width="14" height="10" viewBox="0 0 14 10"><path d="M3 9.500h8.500a2.300 2.300 0 0 0 .2-4.600 3.500 3.500 0 0 0-6.700-.8 2.800 2.800 0 0 0-2 5.400z" fill="#fdfbfd"/><path d="M7 3.800v3M7 7.800v.8" stroke="#e3cfe0" stroke-width=".9"/></svg>
<svg class="abs" style="left:827.500px;top:8.500px" width="15" height="13" viewBox="0 0 15 13"><path d="M5 9.500c-2 .2-3.600 1-3.500 2 .2 1 2.500.8 4-.8l6-7.200c1.800-2.200-.3-3.600-2-1.600l-3 3.800c-1.200 1.600-.2 2.600 1.200 1.400l3-3.400" stroke="#222" stroke-width="1.100" fill="none" stroke-linecap="round"/></svg>
<svg class="abs" style="left:855px;top:9.500px" width="19" height="11" viewBox="0 0 19 11"><rect x=".6" y=".6" width="17.300" height="9.300" rx="1" stroke="#333" stroke-width="1" fill="none"/><path d="M3 3.300h12.500M3 5.300h12.500" stroke="#333" stroke-width="1" stroke-dasharray="1.300 1"/><path d="M5 7.600h8.500" stroke="#333" stroke-width="1"/></svg>
<svg class="abs" style="left:887.500px;top:10px" width="13" height="10" viewBox="0 0 13 10"><rect x=".6" y=".6" width="11.600" height="8.600" rx="1" stroke="#333" stroke-width="1" fill="none"/><path d="M.6 6.200h11.600M6.400 6.200v3" stroke="#333" stroke-width="1"/></svg>
<span class="tx" style="left:917.0px;top:9.7px;font-size:8.4px;line-height:10px;transform:scaleX(0.850);color:#222;">VIE</span>
<span class="tx" style="left:944.8px;top:3.2px;font-size:8.6px;line-height:10px;transform:scaleX(0.965);color:#222;">2:20 PM</span>
<span class="tx" style="left:939.2px;top:16.2px;font-size:8.6px;line-height:10px;transform:scaleX(0.988);color:#222;">10/16/2021</span>
<svg class="abs" style="left:992.500px;top:9px" width="20" height="19" viewBox="0 0 20 19"><path d="M.8.500h12v8.800h-9l-3 2.500z" fill="#1a1a1a"/><path d="M3 3h7.500M3 5.200h7.500M3 7.300h5" stroke="#eddbea" stroke-width=".8"/><circle cx="12.100" cy="12.400" r="5.300" fill="#d9d3d9" stroke="#555" stroke-width=".9"/></svg>
<span class="tx" style="left:1002.300px;top:13px;font-size:7.500px;line-height:9px;color:#222;font-weight:bold">1</span>
<div class="abs" style="left:1020.500px;top:4px;width:1px;height:26px;background:#d9c6d6"></div>
</div>
</body>
</html>
